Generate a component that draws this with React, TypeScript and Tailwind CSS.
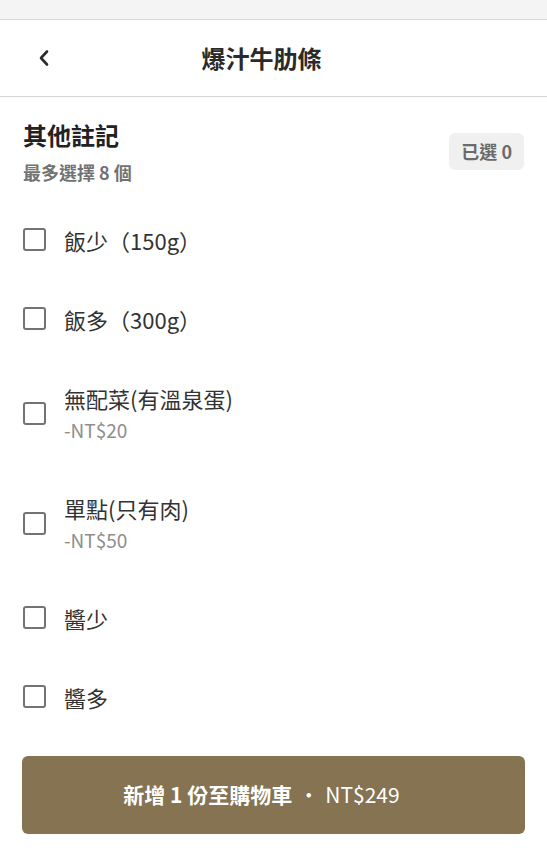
import React, { useState } from 'react';

const options = [
  { id: 'rice-less', name: '飯少（150g）' },
  { id: 'rice-more', name: '飯多（300g）' },
  { id: 'no-side', name: '無配菜(有溫泉蛋)', price: '-NT$20' },
  { id: 'meat-only', name: '單點(只有肉)', price: '-NT$50' },
  { id: 'sauce-less', name: '醬少' },
  { id: 'sauce-more', name: '醬多' },
];

const font = { fontFamily: '"Noto Sans CJK TC", "Noto Sans", sans-serif' };

export default function App() {
  const [picked, setPicked] = useState<string[]>([]);

  const toggle = (id: string) => {
    setPicked((prev) => (prev.includes(id) ? prev.filter((p) => p !== id) : prev.length < 8 ? [...prev, id] : prev));
  };

  return (
    <div className="w-[547px] h-[850px] bg-white flex flex-col text-[#333]" style={font}>
      {/* status strip */}
      <div className="h-[20px] shrink-0 bg-[#f4f4f4] border-b border-[#d9d9d9]" />

      {/* top bar */}
      <div className="relative h-[77px] shrink-0 flex items-center justify-center pr-[24px] border-b border-[#d4d4d4]">
        <button className="absolute left-[29px] top-1/2 -translate-y-1/2 w-[30px] h-[30px] flex items-center justify-center">
          <svg width="14" height="20" viewBox="0 0 14 20" fill="none">
            <path d="M10 3.5 L4 10 L10 16.5" stroke="#2b2b2b" strokeWidth="2.6" strokeLinecap="round" strokeLinejoin="round" />
          </svg>
        </button>
        <h1 className="text-[24px] leading-[30px] font-bold text-[#2a2a2a]">爆汁牛肋條</h1>
      </div>

      {/* group heading */}
      <div className="flex items-start justify-between px-[23px] pt-[23px]">
        <div className="flex flex-col gap-[10px]">
          <h2 className="text-[24px] leading-[30px] font-bold text-[#222]">其他註記</h2>
          <p className="text-[18px] leading-[24px] font-bold text-[#727272]">最多選擇 8 個</p>
        </div>
        <span className="mt-[13px] h-[37px] px-[12px] flex items-center rounded-[6px] bg-[#f0f0f0] text-[18px] font-bold text-[#6b6b6b]">
          已選 {picked.length}
        </span>
      </div>

      {/* option list */}
      <ul className="flex flex-col pt-[16px] px-[23px]">
        {options.map((o) => (
          <li
            key={o.id}
            onClick={() => toggle(o.id)}
            className="flex items-center gap-[18px] py-[26.5px] cursor-pointer"
          >
            <span className="w-[23px] h-[23px] shrink-0 rounded-[3px] border-[2.5px] border-[#737373] flex items-center justify-center">
              {picked.includes(o.id) && (
                <svg width="14" height="14" viewBox="0 0 14 14">
                  <path d="M2 7 L6 11 L12 3" stroke="#737373" strokeWidth="2" fill="none" />
                </svg>
              )}
            </span>
            <div className="flex flex-col gap-[7px]">
              <span className="text-[22px] leading-[26px] text-[#333]">{o.name}</span>
              {o.price && <span className="text-[19px] leading-[24px] text-[#8e8e8e]">{o.price}</span>}
            </div>
          </li>
        ))}
      </ul>

      {/* add to cart */}
      <div className="px-[22px] pt-[20px]">
        <button className="w-full h-[78px] pr-[24px] rounded-[6px] bg-[#857352] text-white text-[21px] flex items-center justify-center">
          <span className="font-bold">新增 1 份至購物車</span>
          <span className="ml-[6px] mr-[6px]">•</span>
          <span>NT$249</span>
        </button>
      </div>
    </div>
  );
}
